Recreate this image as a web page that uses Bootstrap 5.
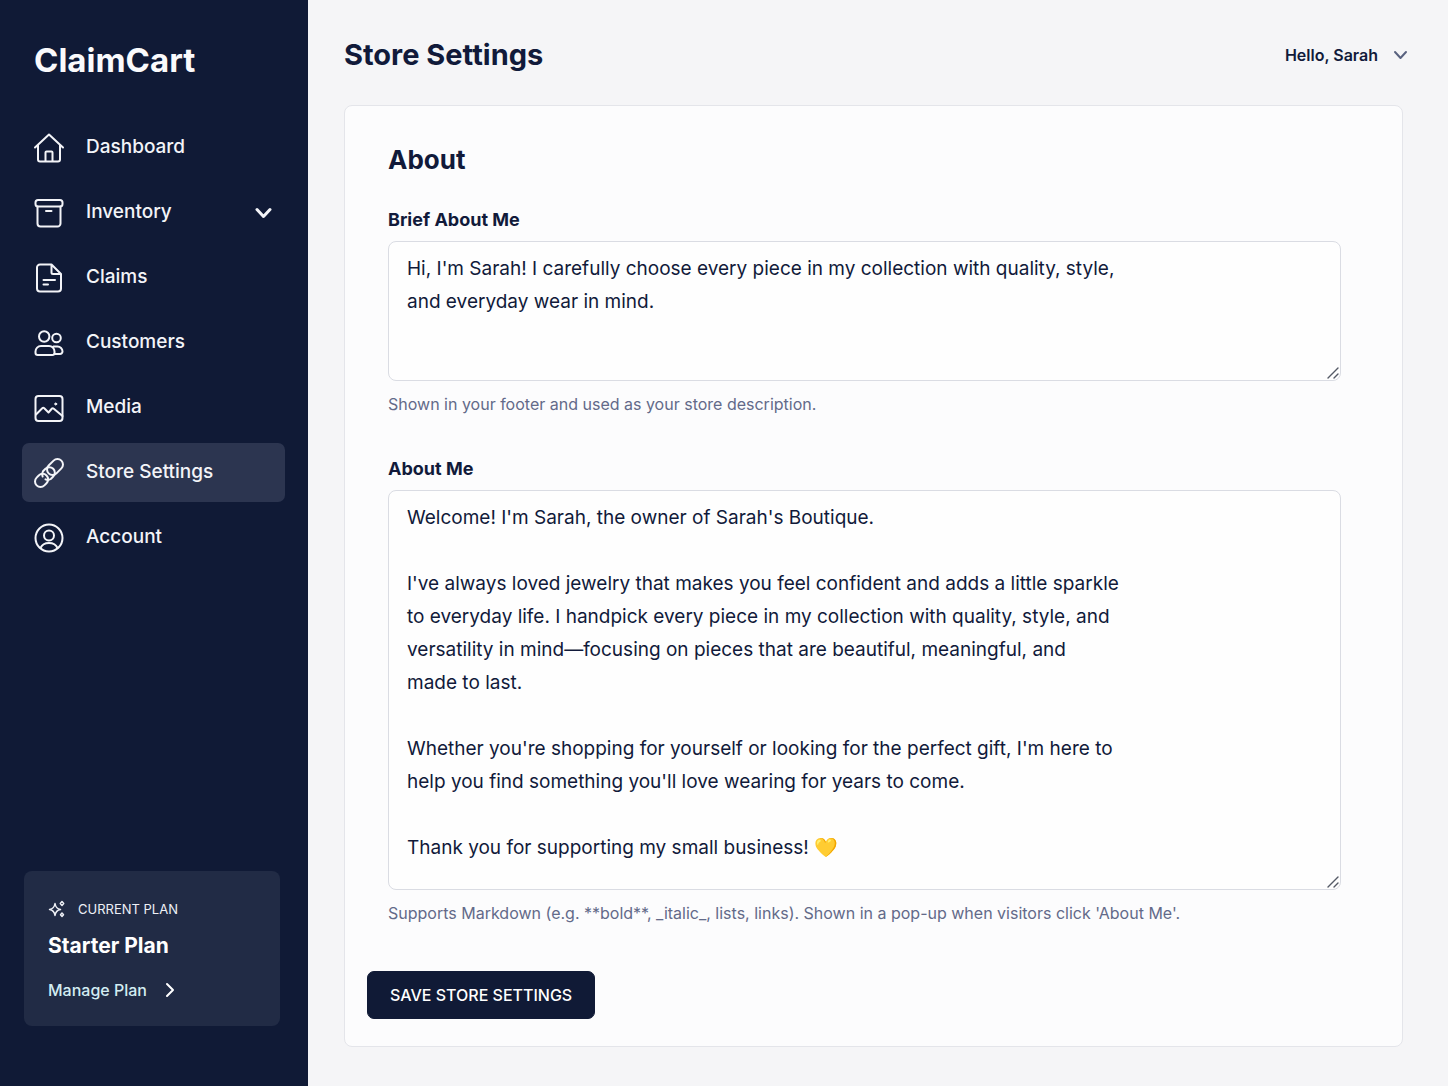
<!DOCTYPE html>
<html lang="en">
<head>
<meta charset="utf-8">
<meta name="viewport" content="width=device-width, initial-scale=1">
<title>Store Settings – ClaimCart</title>
<link href="https://cdn.jsdelivr.net/npm/bootstrap@5.3.0/dist/css/bootstrap.min.css" rel="stylesheet">
<style>
  :root { --navy: #101a36; --ink: #111a3a; --muted-ink: #636a89; }
  body { font-family: Inter, "Liberation Sans", sans-serif; background: #f5f5f7; color: var(--ink); }
  svg { fill: none; stroke: currentColor; stroke-linecap: round; stroke-linejoin: round; flex-shrink: 0; }

  .side-panel { width: 308px; background: var(--navy); padding: 40px 23px 60px 22px; }
  .brand-name { font-size: 33px; line-height: 40px; font-weight: 700; color: #fafafc; margin: 0 0 38px 12px; }
  .side-menu { gap: 6px; }
  .side-menu .nav-link { height: 59px; padding: 0 13px 0 12px; gap: 22px; border-radius: 7px; font-size: 19px; font-weight: 500; color: #f3f4f8; }
  .side-menu .nav-link:hover { background: #1b2542; }
  .side-menu .nav-link.active { background: #2c3550; }
  .side-menu svg { stroke-width: 2; }
  .side-menu .chevron { stroke-width: 3; }

  .plan-box { margin: 0 5px 0 2px; padding: 28px 24px 24px; border-radius: 8px; background: #212b45; color: #fff; }
  .plan-label { font-size: 13px; line-height: 20px; gap: 12px; color: #eef0f6; }
  .plan-name { font-size: 21px; line-height: 28px; font-weight: 700; margin: 13px 0 18px; }
  .plan-link { font-size: 16px; line-height: 24px; font-weight: 500; gap: 18px; color: #d3edf2; }
  .plan-link svg { color: #fff; }

  .page-head { padding: 35px 40px 30px 36px; }
  .page-title { font-size: 29px; line-height: 40px; font-weight: 700; }
  .user-menu { font-size: 16px; line-height: 24px; font-weight: 600; gap: 15px; color: var(--ink); }
  .user-menu svg { color: #59627f; }

  .settings-card { margin: 0 45px 39px 36px; padding: 38px 21px 27px; border-color: #e4e5ea; border-radius: 8px; background: #fcfcfd; color: var(--ink); }
  .settings-fields { padding: 0 40px 0 22px; }
  .section-title { font-size: 26px; line-height: 32px; font-weight: 700; margin-bottom: 32px; }
  .field-block { margin-bottom: 41px; }
  .field-block .form-label { display: block; font-size: 18px; line-height: 24px; font-weight: 700; margin-bottom: 9px; }
  .field-block .form-control { padding: 10px 18px; font-size: 19px; line-height: 33px; color: var(--ink); border-color: #dadce3; border-radius: 8px; background: #fefefe; }
  .field-block .form-text { font-size: 16px; line-height: 24px; margin-top: 11px; color: var(--muted-ink); }
  .brief-box { height: 140px; }
  .story-box { height: 400px; }
  textarea::-webkit-resizer {
    background: url("data:image/svg+xml,%3Csvg xmlns='http://www.w3.org/2000/svg' width='15' height='15' stroke='%23555a66' stroke-width='1.4' stroke-linecap='round'%3E%3Cpath d='M3 13 13 3M9 13l4-4'/%3E%3C/svg%3E") no-repeat right bottom;
  }
  .form-actions { margin-top: 5px; margin-left: 1px; }
  .save-button { height: 48px; padding: 0 22px; font-size: 16px; font-weight: 500; border-radius: 7px; --bs-btn-color: #fff; --bs-btn-bg: var(--navy); --bs-btn-border-color: var(--navy); --bs-btn-hover-color: #fff; --bs-btn-hover-bg: #1d294b; }
</style>
</head>
<body>
<div class="d-flex min-vh-100">
  <aside class="side-panel d-flex flex-column flex-shrink-0">
    <div class="brand-name">ClaimCart</div>
    <nav class="side-menu nav flex-column" aria-label="Main">
      <a class="nav-link d-flex align-items-center" href="#">
        <svg width="30" height="30" viewBox="0 0 30 30"><path d="M1 14.500 15 1.500l14 13M4 12v14.500a2 2 0 0 0 2 2h18a2 2 0 0 0 2-2V12M11.500 28V19.500a1 1 0 0 1 1-1h5a1 1 0 0 1 1 1V28"/></svg>
        Dashboard
      </a>
      <a class="nav-link d-flex align-items-center" href="#" aria-expanded="false">
        <svg width="30" height="30" viewBox="0 0 30 30"><rect x="1.500" y="2" width="27" height="6.500" rx="2.500"/><path d="M3.500 8.500v17a3 3 0 0 0 3 3h17a3 3 0 0 0 3-3v-17M12 13h5.500"/></svg>
        Inventory
        <svg class="chevron ms-auto" width="17" height="12" viewBox="0 0 17 12"><path d="m2 2.500 6.500 7 6.500-7"/></svg>
      </a>
      <a class="nav-link d-flex align-items-center" href="#">
        <svg width="30" height="30" viewBox="0 0 30 30"><path d="M17.500 1.500H6a3 3 0 0 0-3 3v21a3 3 0 0 0 3 3h18a3 3 0 0 0 3-3V11zM17.500 1.500v8a1.500 1.500 0 0 0 1.500 1.500h8M9.500 17H21M9.500 21.500h4.500"/></svg>
        Claims
      </a>
      <a class="nav-link d-flex align-items-center" href="#">
        <svg width="30" height="30" viewBox="0 0 30 30"><circle cx="10.200" cy="8.500" r="5.200"/><circle cx="22.500" cy="10" r="4.300"/><path d="M7 18h8a5.500 5.500 0 0 1 5.500 5.500v1.300a2.200 2.200 0 0 1-2.200 2.200H3.700a2.200 2.200 0 0 1-2.200-2.200v-1.300A5.500 5.500 0 0 1 7 18zM19.500 18.500h4a5 5 0 0 1 5 5 2.500 2.500 0 0 1-2.500 2.500h-6"/></svg>
        Customers
      </a>
      <a class="nav-link d-flex align-items-center" href="#">
        <svg width="30" height="30" viewBox="0 0 30 30"><rect x="1.500" y="3" width="27" height="25" rx="3"/><path d="m2 21.500 6.500-6.500a1 1 0 0 1 1.500 0l4.500 4.500 3.500-4a1 1 0 0 1 1.500 0l9 7.500"/><circle cx="21.700" cy="11" r="1" fill="currentColor" stroke-width="1"/></svg>
        Media
      </a>
      <a class="nav-link active d-flex align-items-center" href="#" aria-current="page">
        <svg width="30" height="30" viewBox="0 0 30 30"><g transform="rotate(-45 15 15)"><rect x="-2.500" y="9.500" width="14" height="11" rx="5.500"/><path d="M8 13a5.500 5.500 0 0 1 4-3.500h3.500a5.500 5.500 0 0 1 0 11H12A5.500 5.500 0 0 1 8 17"/><path d="M14.500 15a5.500 5.500 0 0 1 5.500-5.500h7a5.500 5.500 0 0 1 0 11h-7a5.500 5.500 0 0 1-5.500-5.500z"/></g></svg>
        Store Settings
      </a>
      <a class="nav-link d-flex align-items-center" href="#">
        <svg width="30" height="30" viewBox="0 0 30 30"><circle cx="15" cy="15" r="13.500"/><circle cx="15" cy="12.500" r="5"/><path d="M6.500 25c1.500-3.500 4.700-5 8.500-5s7 1.500 8.500 5"/></svg>
        Account
      </a>
    </nav>
    <section class="plan-box mt-auto">
      <div class="plan-label d-flex align-items-center">
        <svg width="18" height="18" viewBox="0 0 18 18" stroke-width="1.500"><path d="M7 3.500Q7.800 8.700 12.500 9.500 7.800 10.300 7 15.500 6.200 10.300 1.500 9.500 6.200 8.700 7 3.500zM14 1.500l1.700 2L14 5.500l-1.700-2zM14 13l1.500 1.800L14 16.500l-1.500-1.700z"/></svg>
        CURRENT PLAN
      </div>
      <div class="plan-name">Starter Plan</div>
      <a class="plan-link d-inline-flex align-items-center text-decoration-none" href="#">
        Manage Plan
        <svg width="10" height="16" viewBox="0 0 10 16" stroke-width="2"><path d="m2 2 6 6-6 6"/></svg>
      </a>
    </section>
  </aside>

  <main class="flex-grow-1 d-flex flex-column">
    <header class="page-head d-flex justify-content-between align-items-center">
      <h1 class="page-title mb-0">Store Settings</h1>
      <button class="user-menu btn border-0 p-0 d-flex align-items-center" type="button" aria-haspopup="true">
        Hello, Sarah
        <svg width="15" height="10" viewBox="0 0 15 10" stroke-width="2"><path d="m2 2 5.500 6L13 2"/></svg>
      </button>
    </header>

    <form class="settings-card card">
      <div class="settings-fields">
        <h2 class="section-title">About</h2>
        <div class="field-block">
          <label class="form-label" for="brief">Brief About Me</label>
          <textarea class="form-control brief-box" id="brief" aria-describedby="briefHelp" spellcheck="false">Hi, I'm Sarah! I carefully choose every piece in my collection with quality, style,
and everyday wear in mind.</textarea>
          <div class="form-text" id="briefHelp">Shown in your footer and used as your store description.</div>
        </div>
        <div class="field-block">
          <label class="form-label" for="story">About Me</label>
          <textarea class="form-control story-box" id="story" aria-describedby="storyHelp" spellcheck="false">Welcome! I'm Sarah, the owner of Sarah's Boutique.

I've always loved jewelry that makes you feel confident and adds a little sparkle
to everyday life. I handpick every piece in my collection with quality, style, and
versatility in mind—focusing on pieces that are beautiful, meaningful, and
made to last.

Whether you're shopping for yourself or looking for the perfect gift, I'm here to
help you find something you'll love wearing for years to come.

Thank you for supporting my small business! 💛</textarea>
          <div class="form-text" id="storyHelp">Supports Markdown (e.g. **bold**, _italic_, lists, links). Shown in a pop-up when visitors click 'About Me'.</div>
        </div>
      </div>
      <div class="form-actions">
        <button class="save-button btn" type="submit">SAVE STORE SETTINGS</button>
      </div>
    </form>
  </main>
</div>
<script src="https://cdn.jsdelivr.net/npm/bootstrap@5.3.0/dist/js/bootstrap.bundle.min.js"></script>
</body>
</html>
